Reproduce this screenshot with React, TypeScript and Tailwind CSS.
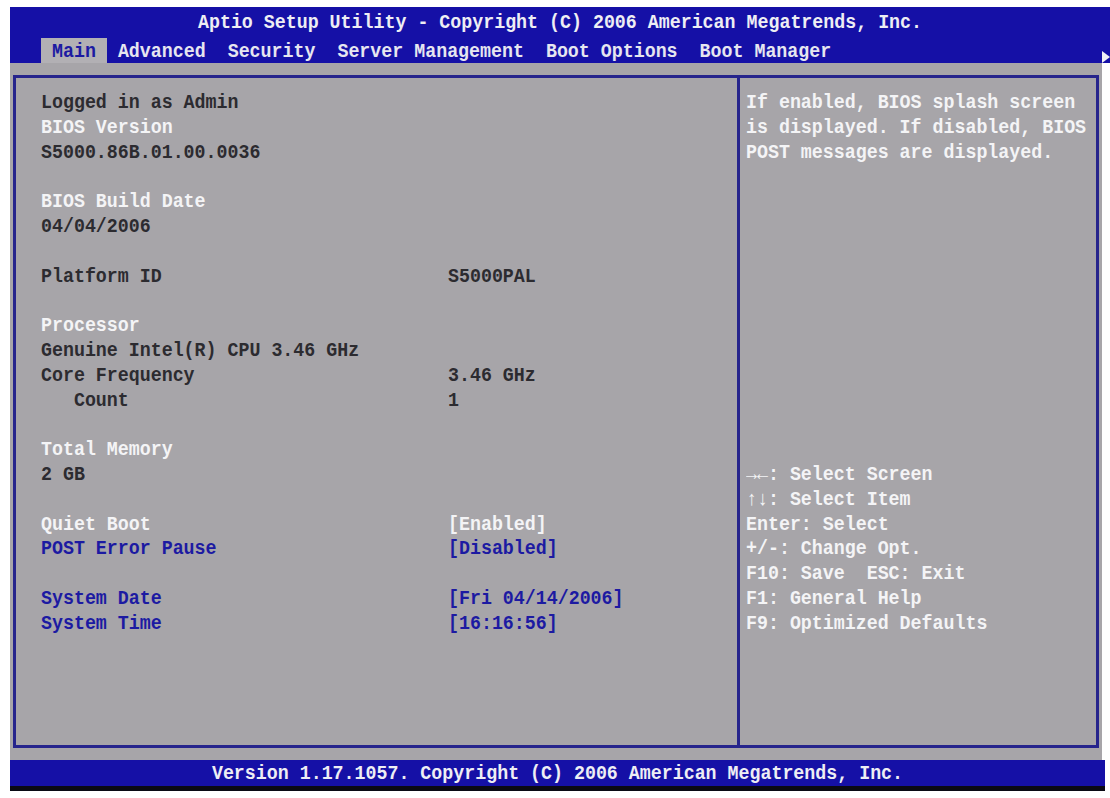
import React from "react";

type Tone = "dark" | "white" | "blue";

interface Row {
  label?: string;
  value?: string;
  tone?: Tone;
}

const TONE: Record<Tone, string> = {
  dark: "text-[#2c2b30]",
  white: "text-[#f4f4f6]",
  blue: "text-[#1c1aa2]",
};

// left panel, one entry per text line (blank lines kept so rows stay on the grid)
const ROWS: Row[] = [
  { label: "Logged in as Admin", tone: "dark" },
  { label: "BIOS Version", tone: "white" },
  { label: "S5000.86B.01.00.0036", tone: "dark" },
  {},
  { label: "BIOS Build Date", tone: "white" },
  { label: "04/04/2006", tone: "dark" },
  {},
  { label: "Platform ID", value: "S5000PAL", tone: "dark" },
  {},
  { label: "Processor", tone: "white" },
  { label: "Genuine Intel(R) CPU 3.46 GHz", tone: "dark" },
  { label: "Core Frequency", value: "3.46 GHz", tone: "dark" },
  { label: "   Count", value: "1", tone: "dark" },
  {},
  { label: "Total Memory", tone: "white" },
  { label: "2 GB", tone: "dark" },
  {},
  { label: "Quiet Boot", value: "[Enabled]", tone: "white" },
  { label: "POST Error Pause", value: "[Disabled]", tone: "blue" },
  {},
  { label: "System Date", value: "[Fri 04/14/2006]", tone: "blue" },
  { label: "System Time", value: "[16:16:56]", tone: "blue" },
];

const HELP = [
  "If enabled, BIOS splash screen",
  "is displayed. If disabled, BIOS",
  "POST messages are displayed.",
];

const KEYS = [
  "→←: Select Screen",
  "↑↓: Select Item",
  "Enter: Select",
  "+/-: Change Opt.",
  "F10: Save  ESC: Exit",
  "F1: General Help",
  "F9: Optimized Defaults",
];

const TABS = ["Main", "Advanced", "Security", "Server Management", "Boot Options", "Boot Manager"];

export default function App() {
  // help lines sit on rows 0-2, key legend on rows 15-21
  const helpRows: string[] = [...HELP, ...Array(12).fill(""), ...KEYS];

  return (
    <div className="w-[1110px] h-[798px] bg-white pt-[7px] pl-[10px] font-['Liberation_Mono',monospace] font-bold text-[18.3px] leading-[24.8px]">
      {/* Header */}
      <div className="relative h-[56px] bg-[#1510a6] flex flex-col">
        <div className="h-[31px] flex items-center justify-center text-[#eeeef4] whitespace-pre scale-y-[1.12]">
          Aptio Setup Utility - Copyright (C) 2006 American Megatrends, Inc.
        </div>
        <div className="h-[25px] flex pl-[31px]">
          {TABS.map((tab, i) => (
            <div
              key={tab}
              className={`h-[25px] flex items-center px-[11px] whitespace-pre ${
                i === 0 ? "bg-[#b2b0b4] text-[#1c1aa2]" : "text-[#e6e6f0]"
              }`}
            >
              <span className="scale-y-[1.12] pt-[1px]">{tab}</span>
            </div>
          ))}
        </div>
        <svg className="absolute right-0 top-[44px]" width="8" height="12" viewBox="0 0 8 12">
          <path d="M0 0 L8 6 L0 12 Z" fill="#f0f0f6" />
        </svg>
      </div>

      {/* Body */}
      <div className="w-[1092px] h-[697px] bg-[#a7a5a9] pt-[12px] px-[3px]">
        <div className="h-[673px] flex border-[3px] border-[#26248c]">
          <div className="w-[724px] border-r-[3px] border-[#26248c] pl-[25px] pt-[12px]">
            {ROWS.map((row, i) => (
              <div
                key={i}
                className={`h-[24.8px] flex whitespace-pre scale-y-[1.12] ${row.tone ? TONE[row.tone] : ""}`}
              >
                <span className="w-[407px]">{row.label ?? ""}</span>
                {row.value && <span>{row.value}</span>}
              </div>
            ))}
          </div>
          <div className="flex-1 pl-[6px] pt-[12px] text-[#f4f4f6]">
            {helpRows.map((line, i) => (
              <div key={i} className="h-[24.8px] whitespace-pre scale-y-[1.12]">
                {line}
              </div>
            ))}
          </div>
        </div>
      </div>

      {/* Footer */}
      <div className="w-[1095px] h-[31px] bg-[#1510a6] border-b-[5px] border-[#0a0a14] flex items-center justify-center text-[#eeeef4] whitespace-pre">
        <span className="scale-y-[1.12]">Version 1.17.1057. Copyright (C) 2006 American Megatrends, Inc.</span>
      </div>
    </div>
  );
}
